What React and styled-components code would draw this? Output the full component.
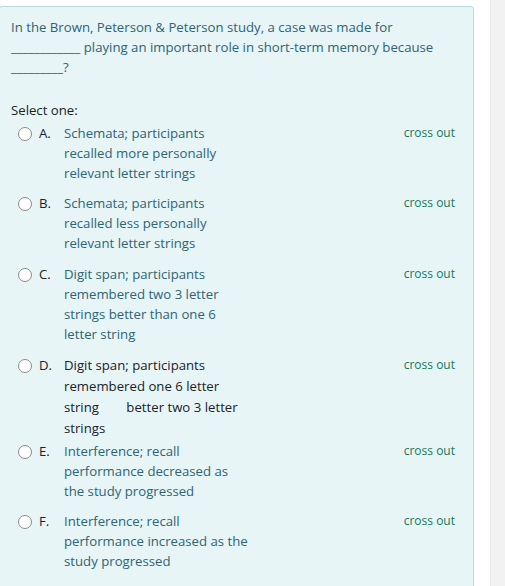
import styled, { createGlobalStyle } from "styled-components";

const GlobalStyle = createGlobalStyle`
  html, body {
    margin: 0;
    padding: 0;
    background: #ffffff;
  }
  body {
    font-family: "Open Sans", "Noto Sans", sans-serif;
  }
`;

const Page = styled.div`
  display: flex;
  width: 505px;
  height: 586px;
  overflow: hidden;
`;

const Main = styled.div`
  width: 490px;
  padding-top: 6px;
  flex-shrink: 0;
`;

const Sidebar = styled.div`
  flex: 1;
  background: #f2f2f2;
  border-left: 1px solid #ececec;
`;

const Formulation = styled.div`
  width: 462px;
  margin-left: -1px;
  min-height: 600px;
  padding: 10px 0 0 11px;
  background: #e7f5f7;
  border: 1px solid #b8dce2;
  border-radius: 3px;
  color: #2f6473;
  font-size: 13.2px;
  line-height: 20px;
`;

const QText = styled.div`
  margin-bottom: 23px;
`;

const Line = styled.span`
  display: block;
  white-space: pre;
`;

const Prompt = styled.div`
  color: #1d2125;
  margin-bottom: 3px;
`;

const Answers = styled.div`
  display: flex;
  flex-direction: column;
`;

const Option = styled.div`
  display: flex;
  align-items: flex-start;
  margin-bottom: ${(p) => p.$gap}px;
`;

const Radio = styled.span`
  width: 12px;
  height: 12px;
  margin: 4px 0 0 7px;
  border: 1px solid #8b8b8b;
  border-radius: 50%;
  background: #ffffff;
  flex-shrink: 0;
`;

const Letter = styled.span`
  width: 25px;
  margin-left: 7px;
  color: #1d2125;
  flex-shrink: 0;
`;

const Choice = styled.div`
  width: 200px;
  color: ${(p) => (p.$dark ? "#1d2125" : "#2f6473")};
  line-height: ${(p) => (p.$dark ? 21 : 20)}px;
`;

const CrossOut = styled.span`
  margin-left: auto;
  margin-right: 18px;
  margin-top: 0;
  font-size: 12px;
  color: #127a5e;
`;

const options = [
  {
    letter: "A.",
    lines: ["Schemata; participants", "recalled more personally", "relevant letter strings"],
    gap: 10,
  },
  {
    letter: "B.",
    lines: ["Schemata; participants", "recalled less personally", "relevant letter strings"],
    gap: 11,
  },
  {
    letter: "C.",
    lines: [
      "Digit span; participants",
      "remembered two 3 letter",
      "strings better than one 6",
      "letter string",
    ],
    gap: 11,
  },
  {
    letter: "D.",
    lines: [
      "Digit span; participants",
      "remembered one 6 letter",
      "string        better two 3 letter",
      "strings",
    ],
    gap: 2,
    dark: true,
  },
  {
    letter: "E.",
    lines: ["Interference; recall", "performance decreased as", "the study progressed"],
    gap: 10,
  },
  {
    letter: "F.",
    lines: ["Interference; recall", "performance increased as the", "study progressed"],
    gap: 10,
  },
];

export default function App() {
  return (
    <>
      <GlobalStyle />
      <Page>
        <Main>
          <Formulation>
            <QText>
              <Line>In the Brown, Peterson &amp; Peterson study, a case was made for</Line>
              <Line>____________ playing an important role in short-term memory because</Line>
              <Line>_________?</Line>
            </QText>
            <Prompt>Select one:</Prompt>
            <Answers>
              {options.map((o) => (
                <Option key={o.letter} $gap={o.gap}>
                  <Radio />
                  <Letter>{o.letter}</Letter>
                  <Choice $dark={o.dark}>
                    {o.lines.map((l) => (
                      <Line key={l}>{l}</Line>
                    ))}
                  </Choice>
                  <CrossOut>cross out</CrossOut>
                </Option>
              ))}
            </Answers>
          </Formulation>
        </Main>
        <Sidebar />
      </Page>
    </>
  );
}
